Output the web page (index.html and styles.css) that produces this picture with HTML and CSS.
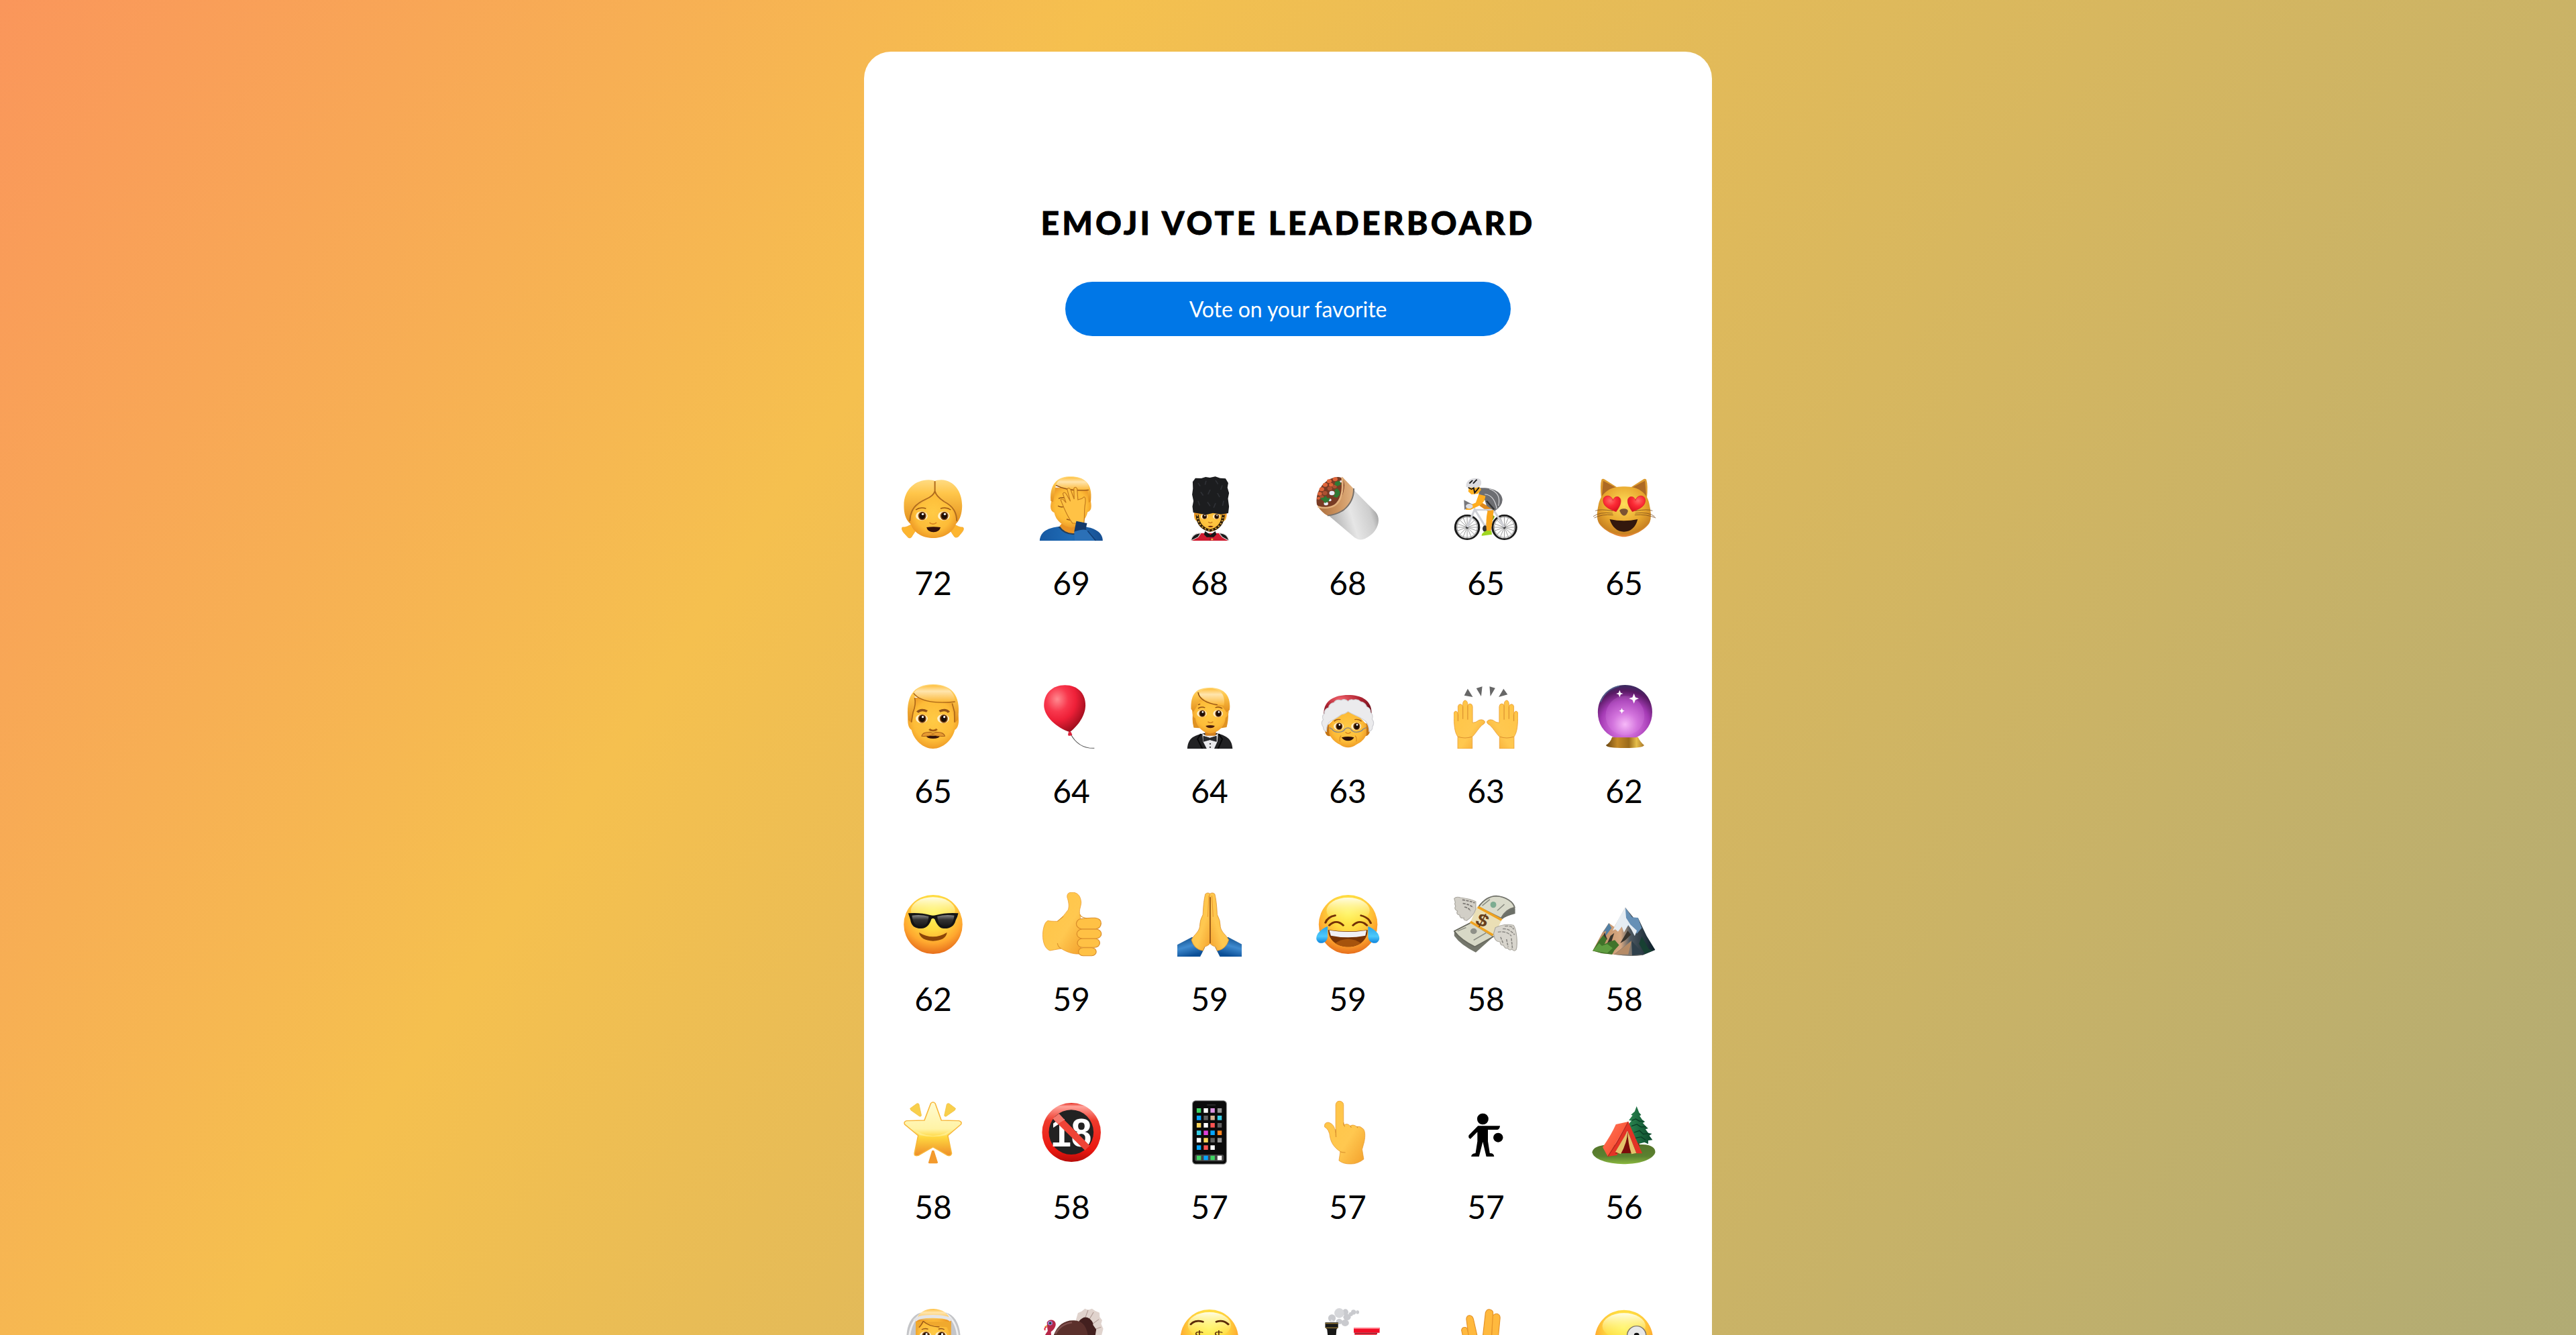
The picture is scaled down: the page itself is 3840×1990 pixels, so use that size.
FILE: index.html
```html
<!DOCTYPE html>
<html lang="en">
<head>
<meta charset="utf-8">
<title>Emoji Vote Leaderboard</title>
<link rel="stylesheet" href="styles.css">
</head>
<body>
<svg class="defs" aria-hidden="true">
  <defs>
    <radialGradient id="skin" cx=".5" cy=".45" r=".6"><stop offset="0" stop-color="#ffca45"/><stop offset=".65" stop-color="#fdbc38"/><stop offset="1" stop-color="#ea9222"/></radialGradient>
    <linearGradient id="hair" x1="0" y1="0" x2="0" y2="1"><stop offset="0" stop-color="#ffdb82"/><stop offset=".3" stop-color="#ffc64a"/><stop offset="1" stop-color="#e18d1c"/></linearGradient>
    <linearGradient id="shine" x1="0" y1="0" x2="0" y2="1"><stop offset="0" stop-color="#ffc040"/><stop offset=".35" stop-color="#ffe5ae"/><stop offset="1" stop-color="#fcb734"/></linearGradient>
    <linearGradient id="hand" x1="0" y1="0" x2="1" y2="1"><stop offset="0" stop-color="#ffc445"/><stop offset=".6" stop-color="#ffc850"/><stop offset="1" stop-color="#f3a02c"/></linearGradient>
    <radialGradient id="face" cx=".5" cy=".3" r=".72"><stop offset="0" stop-color="#fff45c"/><stop offset=".4" stop-color="#ffdb40"/><stop offset=".72" stop-color="#ffa82f"/><stop offset="1" stop-color="#e4681a"/></radialGradient>
    <linearGradient id="gloss" x1="0" y1="0" x2="0" y2="1"><stop offset="0" stop-color="#fffde6"/><stop offset="1" stop-color="#fff45c" stop-opacity="0"/></linearGradient>
    <linearGradient id="blue" x1="0" y1="0" x2="1" y2="0"><stop offset="0" stop-color="#1659a2"/><stop offset=".5" stop-color="#206cb6"/><stop offset="1" stop-color="#174f92"/></linearGradient>
    <linearGradient id="foil" x1="0" y1=".6" x2="1" y2=".3"><stop offset="0" stop-color="#a9a9a9"/><stop offset=".45" stop-color="#e6e6e6"/><stop offset=".8" stop-color="#cdcdcd"/><stop offset="1" stop-color="#8f8f8f"/></linearGradient>
    <linearGradient id="tortilla"><stop offset="0" stop-color="#a86c3e"/><stop offset=".5" stop-color="#c98e58"/><stop offset="1" stop-color="#e2b383"/></linearGradient>
    <radialGradient id="cat" cx=".5" cy=".35" r=".65"><stop offset="0" stop-color="#ffdd58"/><stop offset=".6" stop-color="#e8a72e"/><stop offset=".9" stop-color="#c98322"/><stop offset="1" stop-color="#f18a40"/></radialGradient>
    <radialGradient id="heart" cx=".4" cy=".3" r=".7"><stop offset="0" stop-color="#ff6a68"/><stop offset=".5" stop-color="#fc2b35"/><stop offset="1" stop-color="#dc1322"/></radialGradient>
    <radialGradient id="balloon" cx=".32" cy=".3" r=".75"><stop offset="0" stop-color="#ff8a90"/><stop offset=".35" stop-color="#f8384d"/><stop offset=".6" stop-color="#ee2038"/><stop offset="1" stop-color="#9b0d1c"/></radialGradient>
    <radialGradient id="cap" cx=".35" cy=".2" r=".8"><stop offset="0" stop-color="#f0606a"/><stop offset=".5" stop-color="#b02533"/><stop offset="1" stop-color="#6d0e1a"/></radialGradient>
    <radialGradient id="orb" cx=".5" cy=".75" r=".75"><stop offset="0" stop-color="#fbc0fb"/><stop offset=".3" stop-color="#d06cda"/><stop offset=".6" stop-color="#a43ab4"/><stop offset=".85" stop-color="#571962"/><stop offset="1" stop-color="#3a2c60"/></radialGradient>
    <linearGradient id="gold"><stop offset="0" stop-color="#6a4612"/><stop offset=".3" stop-color="#c48a28"/><stop offset=".6" stop-color="#9a6a1a"/><stop offset=".8" stop-color="#e6bf4b"/><stop offset="1" stop-color="#a8772a"/></linearGradient>
    <linearGradient id="sleeve" x1="0" y1="0" x2=".4" y2="1"><stop offset="0" stop-color="#06407c"/><stop offset=".55" stop-color="#3f8bd0"/><stop offset="1" stop-color="#0b4f97"/></linearGradient>
    <linearGradient id="tear" x1="0" y1="0" x2="0" y2="1"><stop offset="0" stop-color="#2aa2e6"/><stop offset=".6" stop-color="#4cc9fb"/><stop offset="1" stop-color="#0c83dd"/></linearGradient>
    <linearGradient id="star" x1="0" y1="0" x2="0" y2="1"><stop offset="0" stop-color="#fffbd0"/><stop offset=".5" stop-color="#fff3a6"/><stop offset=".65" stop-color="#ffd840"/><stop offset="1" stop-color="#ee8d28"/></linearGradient>
    <linearGradient id="ring" x1="0" y1="0" x2="0" y2="1"><stop offset="0" stop-color="#e5281d"/><stop offset=".06" stop-color="#ffa39b"/><stop offset=".3" stop-color="#ee3a2c"/><stop offset=".8" stop-color="#ea1710"/><stop offset="1" stop-color="#b50c09"/></linearGradient>
    <linearGradient id="rock"><stop offset="0" stop-color="#b98559"/><stop offset=".45" stop-color="#d8a983"/><stop offset=".6" stop-color="#4d5861"/><stop offset="1" stop-color="#0b1e28"/></linearGradient>
    <linearGradient id="grass" x1="0" y1="0" x2="0" y2="1"><stop offset="0" stop-color="#55752a"/><stop offset=".6" stop-color="#5b8130"/><stop offset="1" stop-color="#8ab83e"/></linearGradient>
    <linearGradient id="tree"><stop offset="0" stop-color="#2b8650"/><stop offset="1" stop-color="#0c4a2c"/></linearGradient>
    <linearGradient id="tent" x1="0" y1="0" x2="1" y2="1"><stop offset="0" stop-color="#ff7a5e"/><stop offset=".6" stop-color="#fb5638"/><stop offset="1" stop-color="#d83423"/></linearGradient>
    <linearGradient id="lens" x1="0" y1="0" x2="0" y2="1"><stop offset="0" stop-color="#8a8a8a"/><stop offset=".4" stop-color="#333"/><stop offset="1" stop-color="#161616"/></linearGradient>
    <g id="eye"><ellipse rx="22" ry="20" fill="#fff1c8"/><ellipse cx="2" rx="15" ry="19" fill="#8a4b12"/><ellipse cx="2" rx="11" ry="15" fill="#1c0e06"/><ellipse cx="4" cy="-8" rx="4" ry="5" fill="#fff"/></g>
    <g id="wheel" fill="none"><ellipse rx="44" ry="53" stroke="#1c1c1c" stroke-width="8"/><ellipse rx="38" ry="46" stroke="#777" stroke-width="2"/><path d="M-39 0H39M0-47V47M-28-33L28 33M-28 33L28-33M-37-16L37 16M-37 16L37-16M-15-43L15 43M-15 43L15-43" stroke="#7a7a7a" stroke-width="2"/><ellipse rx="5" ry="6" fill="#222"/></g>
    <path id="love" d="M0-14C-3-30-15-38-26-33C-40-27-38-3-28 10C-18 23 0 31 12 36C20 22 30 5 29-14C28-34 6-38 0-14Z" fill="url(#heart)" stroke="#d81c28" stroke-width="2"/>
    <path id="spark" d="M0-16L4-4L13 0L4 4L0 16L-4 4L-13 0L-4-4Z" fill="#fff"/>
  </defs>
</svg>
<main class="card">
  <h1 class="title">Emoji Vote Leaderboard</h1>
  <a class="button">Vote on your favorite</a>
  <div class="board">

    <div class="entry">
      <svg class="emoji" viewBox="57 90 239 288" preserveAspectRatio="none">
        <path d="M100 300Q80 320 62 318Q58 325 66 340L84 364Q94 370 99 356L116 325ZM250 300Q272 320 287 318Q293 324 285 338L270 360Q258 368 253 356L236 325Z" fill="#fdb52f" stroke="#f0a42a" stroke-width="2"/>
        <path d="M68 220C68 150 110 106 160 106Q176 106 183 111Q190 106 207 106C255 108 284 160 284 220C284 265 272 292 258 306H96C76 288 68 262 68 220Z" fill="url(#hair)"/>
        <path d="M90 290C88 240 130 215 160 190Q180 172 183 155Q188 180 215 205C245 225 268 245 264 290C255 345 210 366 178 366C140 366 100 345 90 290Z" fill="url(#skin)"/>
        <path d="M183 112V156Q178 178 150 192C110 214 92 238 90 290M183 156Q188 180 217 203C250 224 264 250 264 290" fill="none" stroke="#b06c1e" stroke-width="5"/>
        <path d="M112 240Q128 226 150 234M204 234Q226 226 242 240" fill="none" stroke="#985413" stroke-width="4"/>
        <use href="#eye" x="134" y="267"/><use href="#eye" x="216" y="267"/>
        <path d="M163 297Q176 310 189 297" fill="none" stroke="#d9821f" stroke-width="5"/>
        <path d="M152 318Q178 314 204 318Q200 340 178 340Q156 340 152 318Z" fill="#35120a"/>
      </svg>
      <span class="votes">72</span>
    </div>

    <div class="entry">
      <svg class="emoji" viewBox="570 90 239 288" preserveAspectRatio="none">
        <path d="M572 378C574 335 605 320 645 314H730C775 318 806 340 806 378Z" fill="url(#blue)"/>
        <path d="M646 312Q672 360 712 345L712 300H655Z" fill="#e99324"/><path d="M644 316Q668 354 706 347" fill="none" stroke="#243f5c" stroke-width="6"/>
        <path d="M614 210Q608 245 626 252C632 290 660 315 690 320C725 312 745 280 750 250Q768 245 762 205L755 140H625Z" fill="url(#skin)"/>
        <path d="M613 200C608 110 650 90 688 91C735 91 770 120 762 200L754 208L750 152C710 158 670 152 632 130L622 205Z" fill="url(#hair)"/>
        <path d="M632 130C640 100 665 94 690 94C730 96 758 115 754 151C705 156 665 150 632 130Z" fill="url(#shine)"/>
        <path d="M632 130C665 150 705 156 754 151M642 190Q652 182 664 186M640 222Q650 230 662 226M672 282L686 286" fill="none" stroke="#914f15" stroke-width="4"/>
        <path d="M694 300C670 262 660 225 650 195Q656 186 664 200L670 208L658 168Q664 155 672 172L686 202L674 148Q680 136 687 150L700 192L699 144Q705 132 711 146L714 195L728 190L737 182Q744 186 741 212C736 244 740 270 736 300Z" fill="#ffc245" stroke="#c37a1e" stroke-width="3"/>
        <path d="M708 290L748 300Q742 325 746 334L700 338Z" fill="#14396a"/>
        <path d="M700 338Q740 322 750 334L780 378H702Z" fill="#2b70b7"/><path d="M750 334L780 378" stroke="#123c72" stroke-width="4"/>
      </svg>
      <span class="votes">69</span>
    </div>

    <div class="entry">
      <svg class="emoji" viewBox="1083 90 239 288" preserveAspectRatio="none">
        <path d="M1134 378Q1138 345 1165 344H1245Q1270 348 1274 378Z" fill="#cf1b2f"/>
        <path d="M1134 378Q1138 345 1170 344L1160 362ZM1274 378Q1270 345 1238 344L1250 362Z" fill="#1a1a1a" stroke="#ddd" stroke-width="3"/>
        <path d="M1186 335L1206 352L1224 335L1228 350L1218 362H1192L1182 350Z" fill="#161616"/>
        <path d="M1146 250H1266Q1268 290 1252 292Q1240 332 1206 338Q1172 332 1160 292Q1142 290 1146 250Z" fill="url(#skin)"/>
        <path d="M1157 262Q1160 322 1205 332Q1250 322 1254 262" fill="none" stroke="#2b1a05" stroke-width="11"/><path d="M1157 262Q1160 322 1205 332Q1250 322 1254 262" fill="none" stroke="#d5a340" stroke-width="6" stroke-dasharray="6 8"/>
        <g transform="translate(1183 270) scale(.6)"><use href="#eye"/></g><g transform="translate(1228 270) scale(.6)"><use href="#eye"/></g>
        <path d="M1198 294Q1206 303 1213 294" fill="none" stroke="#c97a1e" stroke-width="4"/><path d="M1196 314Q1206 309 1217 314Q1206 322 1196 314Z" fill="#6b2b12"/>
        <path d="M1140 115L1150 98L1172 99L1188 93L1204 96L1224 91L1242 98L1262 100L1272 120L1269 140L1275 165L1271 190L1275 225L1272 255L1245 260L1215 254L1190 262L1160 256L1142 252L1139 225L1143 200L1138 172L1141 145Z" fill="#1c1d1f"/>
        <path d="M1160 120l8 14M1190 110l-4 18M1225 108l9 17M1250 130l-6 20M1170 160l9 16M1205 150l-8 20M1232 165l8 18M1160 200l6 20M1195 205l10 18M1225 210l-7 20M1255 200l-4 22" stroke="#303237" stroke-width="4"/>
        <path d="M1205 362V378" stroke="#8c1220" stroke-width="2"/><circle cx="1212" cy="372" r="4" fill="#ecc342"/>
      </svg>
      <span class="votes">68</span>
    </div>

    <div class="entry">
      <svg class="emoji" viewBox="77 90 239 288" preserveAspectRatio="none">
        <path d="M122 262L212 142L300 250C325 285 305 345 262 368Q240 380 222 364Z" fill="url(#foil)"/>
        <path d="M82 215Q96 250 122 266Q150 262 180 240Q222 200 219 146L176 92Z" fill="url(#tortilla)"/>
        <path d="M122 266Q155 262 182 240Q220 202 219 144" fill="none" stroke="#77706a" stroke-width="5"/>
        <path d="M82 215C74 165 105 98 160 93Q182 92 184 130Q182 190 148 220C122 236 90 232 82 215Z" fill="#783b24"/>
        <g fill="#e0653a"><circle cx="150" cy="103" r="9"/><circle cx="128" cy="112" r="9"/><circle cx="113" cy="128" r="9"/><circle cx="100" cy="148" r="9"/><circle cx="93" cy="168" r="8"/><circle cx="135" cy="128" r="8"/><circle cx="88" cy="188" r="6"/></g>
        <g fill="#ad5132"><circle cx="130" cy="145" r="9"/><circle cx="112" cy="165" r="9"/><circle cx="148" cy="136" r="8"/><circle cx="100" cy="183" r="8"/></g>
        <g fill="#e7edf8"><circle cx="138" cy="165" r="10"/><circle cx="116" cy="212" r="8"/><circle cx="172" cy="113" r="5"/><circle cx="130" cy="196" r="6"/></g>
        <path d="M94 188L110 184L114 176L122 188L132 186L126 202L112 210L106 200ZM148 150L158 144L168 160L166 174L156 186L142 180L150 168ZM150 115L166 110L172 126L158 134L148 128Z" fill="#2f7a34"/>
        <path d="M176 96Q184 190 148 220Q122 238 86 226" fill="none" stroke="#e3b27e" stroke-width="7"/>
      </svg>
      <span class="votes">68</span>
    </div>

    <div class="entry">
      <svg class="emoji" viewBox="590 90 239 288" preserveAspectRatio="none">
        <use href="#wheel" x="640" y="318"/><use href="#wheel" x="778" y="318"/>
        <path d="M734 262L742 270L736 286L728 276Z" fill="#7aa51d"/>
        <path d="M690 205L740 240L720 250L686 222Z" fill="#e0891c"/>
        <path d="M640 318L668 238L706 312M668 240H738L778 318M706 318L738 245" fill="none" stroke="#cfd0d6" stroke-width="8"/>
        <ellipse cx="706" cy="324" rx="9" ry="14" fill="#333"/>
        <path d="M686 142C735 138 770 160 771 195Q770 225 742 245L712 222L705 195L683 172Z" fill="#6d6e72"/><path d="M705 170Q740 172 750 235M722 146Q768 165 756 222" fill="none" stroke="#d8d8da" stroke-width="3"/><path d="M712 200L740 238" stroke="#333" stroke-width="6"/>
        <path d="M683 170L708 178Q706 202 690 218L652 240L634 240L640 225L672 208Z" fill="#ffad1f"/>
        <path d="M738 240Q736 285 728 335L712 337Q708 280 716 245Z" fill="#f9a51c"/>
        <path d="M712 332L730 334L732 350L694 356Q692 344 712 332Z" fill="#a0d622"/>
        <path d="M628 196L660 216L658 234L640 232L630 240Z" fill="#77777b"/><ellipse cx="648" cy="224" rx="13" ry="11" fill="#dfdfe3"/>
        <path d="M647 134L682 130L692 150L680 168L656 171L644 158Z" fill="#ffb022"/>
        <path d="M636 138Q634 100 672 98Q696 98 692 125Q688 142 664 142Z" fill="#dcdce0"/><path d="M648 122L660 108M662 122L676 104M644 140L656 148L664 142L668 164L684 140" fill="none" stroke="#18181a" stroke-width="5"/>
      </svg>
      <span class="votes">65</span>
    </div>

    <div class="entry">
      <svg class="emoji" viewBox="1103 90 239 288" preserveAspectRatio="none">
        <path d="M1139 104Q1144 98 1152 105L1198 140L1138 190Q1132 130 1139 104ZM1305 104Q1299 98 1292 105L1246 140L1307 190Q1312 130 1305 104Z" fill="#dd9c32"/><path d="M1145 110L1192 140L1140 182ZM1300 110L1252 140L1305 182Z" fill="#ad6a25"/>
        <path d="M1222 136C1280 134 1312 170 1317 220Q1326 270 1318 295C1305 330 1250 361 1222 361S1140 330 1127 295Q1118 270 1127 220C1134 170 1166 134 1222 136Z" fill="url(#cat)"/>
        <use href="#love" x="1181" y="212"/><g transform="translate(1265 212) scale(-1 1)"><use href="#love"/></g>
        <path d="M1206 244Q1208 235 1222 235Q1236 235 1237 246Q1232 266 1222 266Q1212 264 1206 244Z" fill="#7c5332"/>
        <path d="M1169 282Q1222 296 1273 282C1266 318 1246 338 1222 338S1178 318 1169 282Z" fill="#33180d"/>
        <path d="M1180 245Q1135 235 1116 244M1180 255Q1130 248 1108 270M1182 263Q1140 258 1112 276M1264 245Q1310 235 1328 244M1264 255Q1315 248 1336 270M1262 263Q1305 258 1340 276" fill="none" stroke="#754719" stroke-width="2"/>
      </svg>
      <span class="votes">65</span>
    </div>

    <div class="entry">
      <svg class="emoji" viewBox="57 90 239 288" preserveAspectRatio="none">
        <path d="M84 228Q78 280 96 294C105 340 140 378 176 378S248 340 257 294Q276 280 270 228L256 150H96Z" fill="url(#skin)"/>
        <path d="M84 250C74 150 100 90 176 90C255 90 282 155 268 250L258 262L244 172L108 145Q112 180 104 208L96 262Z" fill="url(#hair)"/>
        <path d="M104 132C115 105 145 95 176 94C225 94 255 120 258 166C215 174 140 178 104 132Z" fill="url(#shine)"/>
        <path d="M104 130C135 178 215 174 258 168M247 175L256 215V260M108 150Q114 180 102 215L96 260" fill="none" stroke="#ab6618" stroke-width="4"/>
        <path d="M118 215Q132 198 154 211M200 211Q222 198 235 215" fill="none" stroke="#8f5118" stroke-width="10"/>
        <use href="#eye" x="134" y="244"/><use href="#eye" x="214" y="244"/>
        <path d="M162 291Q176 304 191 291" fill="none" stroke="#a35c14" stroke-width="8"/>
        <path d="M150 320H202Q198 333 176 333Q155 333 150 320Z" fill="#32120a"/><path d="M134 322Q136 304 165 304L176 309L188 304Q216 304 220 322Q195 325 176 316Q155 325 134 322Z" fill="#e69a30" stroke="#a9611a" stroke-width="3"/>
      </svg>
      <span class="votes">65</span>
    </div>

    <div class="entry">
      <svg class="emoji" viewBox="570 90 239 288" preserveAspectRatio="none">
        <path d="M686 310Q715 378 775 376" fill="none" stroke="#555" stroke-width="3"/>
        <path d="M684 304C635 285 588 235 588 184C588 130 620 94 666 94S742 130 742 184C742 230 715 275 684 304Z" fill="url(#balloon)"/>
        <path d="M679 304L688 303L693 316Q685 324 677 318Z" fill="#dc243b"/>
      </svg>
      <span class="votes">64</span>
    </div>

    <div class="entry">
      <svg class="emoji" viewBox="1083 90 239 288" preserveAspectRatio="none">
        <path d="M1120 378C1123 325 1150 318 1185 308H1228C1260 318 1286 330 1288 378Z" fill="#222224"/>
        <path d="M1142 205Q1136 255 1144 284L1164 286H1248L1266 282Q1274 250 1272 190Z" fill="#df9222"/>
        <path d="M1186 300H1226V322L1206 335L1186 322Z" fill="#d4811f"/>
        <path d="M1176 310L1190 320H1222L1234 310L1232 345L1220 378H1192L1178 345Z" fill="#eaeaed"/>
        <path d="M1180 322L1204 331L1228 322V346L1204 338L1180 346Z" fill="#2b2c30" stroke="#111" stroke-width="2"/><circle cx="1205" cy="356" r="3" fill="#222"/><circle cx="1205" cy="371" r="3" fill="#222"/>
        <path d="M1170 312L1158 335L1176 378M1236 312L1250 335L1234 378" fill="none" stroke="#070708" stroke-width="5"/>
        <path d="M1140 190Q1134 235 1150 242C1153 280 1180 308 1206 310C1232 308 1260 280 1262 240Q1278 230 1272 190L1250 150H1165Z" fill="url(#skin)"/>
        <path d="M1134 200C1132 130 1155 105 1205 105C1255 105 1284 140 1277 205L1266 215L1250 190C1215 188 1180 165 1166 158L1155 190L1142 214Z" fill="url(#hair)"/>
        <path d="M1164 140C1165 110 1190 108 1210 109C1245 112 1262 140 1256 185Q1205 182 1164 140Z" fill="url(#shine)"/>
        <path d="M1160 126Q1166 170 1232 182M1160 182L1168 178" fill="none" stroke="#8e4e14" stroke-width="4"/>
        <path d="M1160 198Q1172 188 1186 195M1224 195Q1236 188 1250 198" fill="none" stroke="#8e4e14" stroke-width="4"/>
        <g transform="translate(1174 221) scale(.82)"><use href="#eye"/></g><g transform="translate(1234 221) scale(.82)"><use href="#eye"/></g>
        <path d="M1196 257Q1206 267 1216 257" fill="none" stroke="#d18120" stroke-width="4"/><path d="M1188 276Q1206 270 1222 276Q1218 286 1206 286Q1194 286 1188 276Z" fill="#4a1c0b"/>
      </svg>
      <span class="votes">64</span>
    </div>

    <div class="entry">
      <svg class="emoji" viewBox="77 90 239 288" preserveAspectRatio="none">
        <path d="M112 270Q108 322 130 322H264Q284 318 280 265Z" fill="#c37314"/>
        <path d="M108 225C105 165 145 138 198 138S288 165 285 225Z" fill="url(#cap)"/>
        <path d="M126 270L160 230L198 212L236 230L266 270V315C255 345 240 352 228 360Q198 386 168 360C155 352 138 340 128 312Z" fill="url(#skin)"/>
        <path d="M198 166Q185 152 172 162Q155 154 145 172Q128 176 126 194Q108 202 111 220Q98 232 106 248Q94 262 106 282Q105 296 118 302Q116 270 134 254Q158 240 172 226Q188 222 198 212Q212 222 224 228Q244 238 262 254Q276 272 276 302Q290 294 288 280Q298 262 287 246Q292 226 281 216Q282 197 267 190Q262 172 245 168Q232 154 218 160Q205 154 198 166Z" fill="#ebebed" stroke="#d0d0d4" stroke-width="3"/>
        <path d="M146 256Q154 244 170 248M222 248Q238 244 248 256" fill="none" stroke="#a45c14" stroke-width="4"/>
        <g transform="translate(163 278) scale(.85)"><use href="#eye"/></g><g transform="translate(228 278) scale(.85)"><use href="#eye"/></g>
        <path d="M128 284L138 290Q146 306 164 304Q182 302 186 290Q198 280 208 290Q214 304 230 304Q248 302 254 290L266 284" fill="none" stroke="#8d8780" stroke-width="4"/>
        <path d="M188 304Q198 316 208 304" fill="none" stroke="#d8811b" stroke-width="4"/><path d="M174 328Q198 320 220 328Q214 343 198 343T174 328Z" fill="#2c1009"/>
        <path d="M172 320Q164 330 168 346M224 320Q232 330 228 346" fill="none" stroke="#d98b20" stroke-width="3"/>
      </svg>
      <span class="votes">63</span>
    </div>

    <div class="entry">
      <svg class="emoji" viewBox="590 90 239 288" preserveAspectRatio="none">
        <path d="M642 110L661 147L629 140ZM674 108L696 100L692 144ZM723 100L744 107L726 144ZM775 110L790 136L757 147Z" fill="#676767"/>
        <path id="palm" d="M605 378V325C592 300 592 275 590 222Q592 210 598 210Q605 212 606 225V188Q608 179 615 179Q622 180 624 190V175Q626 162 633 162Q640 163 642 178V186Q644 177 651 177Q659 178 660 190V262Q672 262 684 250Q700 245 706 258Q706 266 694 274C680 290 672 310 659 325V378Z" fill="url(#hand)" stroke="#e8982c" stroke-width="2"/>
        <path d="M606 225V255M624 190V245M642 186V248M606 325Q632 335 658 325" fill="none" stroke="#dc9330" stroke-width="3"/>
        <g transform="translate(1419 0) scale(-1 1)"><use href="#palm"/><path d="M606 225V255M624 190V245M642 186V248M606 325Q632 335 658 325" fill="none" stroke="#dc9330" stroke-width="3"/></g>
      </svg>
      <span class="votes">63</span>
    </div>

    <div class="entry">
      <svg class="emoji" viewBox="1103 90 239 288" preserveAspectRatio="none">
        <path d="M1178 326H1274Q1284 350 1297 362Q1294 375 1226 375T1155 362Q1172 350 1178 326Z" fill="url(#gold)"/>
        <path d="M1185 328C1145 305 1125 265 1125 215C1125 145 1170 93 1226 93S1327 145 1327 215C1327 265 1305 305 1268 328Z" fill="url(#orb)"/>
        <ellipse cx="1226" cy="230" rx="72" ry="88" fill="#e29af0" opacity=".18"/>
        <path d="M1135 170Q1155 110 1205 98" fill="none" stroke="#557299" stroke-width="5" opacity=".7"/>
        <use href="#spark" x="1206" y="132"/><g transform="translate(1259 154) scale(1.4)"><use href="#spark"/></g><g transform="translate(1214 209) scale(.8)"><use href="#spark"/></g>
      </svg>
      <span class="votes">62</span>
    </div>

    <div class="entry">
      <svg class="emoji" viewBox="57 90 239 288" preserveAspectRatio="none">
        <ellipse cx="176.500" cy="234" rx="109" ry="132" fill="url(#face)"/><ellipse cx="176" cy="172" rx="82" ry="60" fill="url(#gloss)"/>
        <path d="M84 184Q130 180 165 192Q176 196 188 192Q225 180 270 184L266 200L260 216C255 245 235 254 215 252C195 250 188 225 182 210Q176 204 170 210C165 230 155 252 132 252C108 252 95 240 92 212Z" fill="#141414"/>
        <path d="M98 194Q130 188 160 198Q158 242 130 244Q102 242 98 194ZM255 194Q222 188 192 198Q195 242 222 244Q250 242 255 194Z" fill="url(#lens)"/>
        <path d="M124 270Q176 308 228 270Q224 306 176 308Q130 306 124 270Z" fill="#8c4508"/>
      </svg>
      <span class="votes">62</span>
    </div>

    <div class="entry">
      <svg class="emoji" viewBox="570 90 239 288" preserveAspectRatio="none">
        <path d="M638 220Q610 220 603 217C580 225 572 335 610 351L652 342C675 360 700 368 722 366L732 300L722 192C716 170 726 155 726 135C724 105 712 90 690 90Q672 92 674 112C680 135 682 150 678 168Q660 200 638 220Z" fill="url(#hand)" stroke="#e9992c" stroke-width="2"/>
        <g fill="#ffc145" stroke="#d98c2a" stroke-width="3"><rect x="716" y="338" width="66" height="36" rx="17" ry="18"/><rect x="712" y="297" width="83" height="40" rx="19" ry="20"/><rect x="710" y="255" width="91" height="42" rx="20" ry="21"/><path d="M720 210Q750 203 778 205Q800 208 800 230Q798 252 780 254H726Q708 248 708 230Q710 216 720 210Z"/></g>
        <path d="M638 220Q650 208 660 198M638 318Q640 335 652 342M722 190Q724 202 748 207" fill="none" stroke="#dc942c" stroke-width="3"/>
      </svg>
      <span class="votes">59</span>
    </div>

    <div class="entry">
      <svg class="emoji" viewBox="1083 90 239 288" preserveAspectRatio="none">
        <path id="cuff" d="M1083 325L1138 290L1186 335L1168 378H1083Z" fill="url(#sleeve)"/><g transform="translate(2409 0) scale(-1 1)"><use href="#cuff"/></g>
        <path id="pray" d="M1206 98Q1196 88 1187 98Q1180 130 1178 190Q1166 215 1166 245C1162 270 1145 280 1135 303Q1145 345 1178 352L1185 334Q1205 325 1205 315Z" fill="url(#hand)" stroke="#d98a26" stroke-width="2"/>
        <g transform="translate(2409 0) scale(-1 1)"><use href="#pray"/></g>
        <path d="M1205 112V318" stroke="#8b4b12" stroke-width="4"/><path d="M1200 105L1196 200M1211 105L1216 200" stroke="#ed9f30" stroke-width="3"/>
      </svg>
      <span class="votes">59</span>
    </div>

    <div class="entry">
      <svg class="emoji" viewBox="77 90 239 288" preserveAspectRatio="none">
        <ellipse cx="198" cy="234" rx="109" ry="132" fill="url(#face)"/><ellipse cx="198" cy="172" rx="80" ry="58" fill="url(#gloss)"/>
        <path d="M114 226Q122 200 150 194M246 194Q274 202 282 228M128 238Q154 208 180 238M216 238Q242 208 268 238" fill="none" stroke="#743107" stroke-width="8" stroke-linecap="round"/>
        <path d="M124 258Q198 272 270 258C272 302 240 334 198 334S124 302 124 258Z" fill="#773306"/><path d="M150 318Q198 280 246 318Q225 334 198 334T150 318Z" fill="#a6530c"/>
        <path d="M128 260Q198 274 266 260L262 284Q198 300 134 284Z" fill="#f0f0f5"/>
        <path id="drop" d="M122 242C96 256 80 275 80 296C82 326 118 325 122 290Z" fill="url(#tear)"/><g transform="translate(394 0) scale(-1 1)"><use href="#drop"/></g>
      </svg>
      <span class="votes">59</span>
    </div>

    <div class="entry">
      <svg class="emoji" viewBox="590 90 239 288" preserveAspectRatio="none">
        <path d="M592 264L654 226L738 288L672 359Q615 325 592 285Z" fill="#74766b"/>
        <path d="M592 264L654 226L738 288L668 334Q615 302 592 264Z" fill="#d7d8c6" stroke="#68695f" stroke-width="5"/>
        <path d="M682 156Q710 108 748 106C785 108 815 135 818 165V186Q785 195 768 212L708 170Z" fill="#6c7068"/>
        <path d="M682 156Q710 108 748 107C785 110 812 135 816 158Q785 165 766 206Z" fill="#dadbcb" stroke="#73746c" stroke-width="5"/>
        <ellipse cx="737" cy="146" rx="11" ry="14" fill="#7dac91"/><ellipse cx="664" cy="264" rx="12" ry="13" fill="#8e9087"/><path d="M752 172L778 144M696 150L724 122M664 304L710 272M604 264L636 248" stroke="#888a80" stroke-width="4"/>
        <path d="M678 152L770 210L738 288L650 228Z" fill="#eadfb5"/><path d="M680 156L768 214M652 222L736 282" stroke="#efa21f" stroke-width="10"/>
        <text x="697" y="242" class="cash" transform="rotate(24 697 215)">$</text>
        <path d="M592 118Q600 108 615 114Q655 120 672 132L672 165Q665 195 638 217Q625 215 628 205Q612 208 612 192Q598 190 604 174Q590 166 597 152Q592 140 596 136Z" fill="#d2cfc7" stroke="#aaa79f" stroke-width="3"/>
        <path d="M622 124Q655 130 668 138M624 140Q650 145 662 158M630 156Q648 160 652 174" fill="none" stroke="#77736f" stroke-width="5" stroke-dasharray="10 4"/>
        <path d="M745 248Q780 228 812 238C824 260 828 320 822 346Q816 358 806 344Q798 354 790 340Q780 344 774 326Q764 330 762 312Q748 312 742 296L738 276Z" fill="#d8d5cd" stroke="#aba8a0" stroke-width="3"/>
        <path d="M780 242Q808 238 812 256M772 254Q794 250 816 280M754 268Q788 262 804 286M786 300L792 335M804 296L808 342M764 290L774 320" fill="none" stroke="#898782" stroke-width="4" stroke-dasharray="12 4"/>
      </svg>
      <span class="votes">58</span>
    </div>

    <div class="entry">
      <svg class="emoji" viewBox="1103 90 239 288" preserveAspectRatio="none">
        <path d="M1106 352L1142 270L1166 228L1186 245L1227 158L1262 210L1274 204L1306 285L1338 348L1292 371Q1240 378 1195 370L1140 363Z" fill="url(#rock)"/>
        <path d="M1227 158L1252 202L1274 204L1288 250L1270 275L1240 240L1224 248Z" fill="#6690b6"/>
        <path d="M1227 158L1204 204L1180 262L1190 256L1200 266L1214 244L1222 270L1238 236L1250 258L1262 286L1270 262L1246 235L1230 205Z" fill="#e6edf3"/>
        <path d="M1166 228L1144 270L1156 262L1150 292L1176 250Z" fill="#537fa3"/>
        <path d="M1172 285L1186 272L1176 310L1152 340ZM1236 262L1248 280L1226 305L1208 318ZM1150 270L1160 300L1134 320Z" fill="#39342d"/>
        <path d="M1106 352L1130 305L1145 282L1158 300L1150 322L1172 310L1188 304L1204 326L1186 350L1178 368L1140 363Z" fill="#41732a"/><path d="M1106 352L1130 318L1140 330L1160 322L1180 340L1160 362Z" fill="#5f9d40"/>
        <path d="M1185 368L1250 306L1272 340L1290 372Q1235 378 1185 368Z" fill="#7d7771"/><path d="M1250 306L1296 368L1252 373Z" fill="#2f404b"/><path d="M1186 368L1250 308L1238 368Z" fill="#b58b66"/><path d="M1288 288L1315 345L1330 350L1300 366L1278 320Z" fill="#174032"/>
      </svg>
      <span class="votes">58</span>
    </div>

    <div class="entry">
      <svg class="emoji" viewBox="57 90 239 288" preserveAspectRatio="none">
        <path d="M91 127L116 105Q122 103 124 108L133 158Q132 164 126 162L94 135ZM260 127L236 105Q230 103 227 108L218 158Q219 164 225 162L257 135Z" fill="#f8cf4c" stroke="#f3c040" stroke-width="2"/>
        <path d="M172 316Q176 312 180 316L194 368Q194 373 188 373H164Q158 373 159 368Z" fill="#f39a2d"/>
        <path d="M168 104Q176 94 184 104L207 180L272 182Q285 186 280 198L231 248L245 328Q242 342 230 337L176 299L122 337Q106 342 107 328L121 248L71 198Q66 186 78 182L144 180Z" fill="url(#star)" stroke="#f8b83c" stroke-width="4"/>
        <path d="M94 210Q176 290 258 210L224 246Q176 260 128 246Z" fill="#fff3a0" opacity=".6"/>
      </svg>
      <span class="votes">58</span>
    </div>

    <div class="entry">
      <svg class="emoji" viewBox="570 90 239 288" preserveAspectRatio="none">
        <ellipse cx="690" cy="234" rx="109" ry="132" fill="url(#ring)"/><ellipse cx="689" cy="233" rx="83" ry="100" fill="#222"/>
        <text x="613" y="297" class="age" textLength="152" lengthAdjust="spacingAndGlyphs">18</text>
        <path d="M641 151L758 293L740 314L623 176Z" fill="#ef4437"/><path d="M621 172L644 150L665 178L640 196Z" fill="#f5776c"/>
      </svg>
      <span class="votes">58</span>
    </div>

    <div class="entry">
      <svg class="emoji" viewBox="1083 90 239 288" preserveAspectRatio="none">
        <rect x="1139" y="92" width="127" height="284" rx="12" ry="15" fill="#0b0b0b" stroke="#999" stroke-width="3"/><rect x="1192" y="108" width="34" height="7" rx="3" fill="#252525"/>
        <rect x="1148" y="333" width="108" height="30" rx="8" fill="#454545"/>
        <g fill="#3fd563"><path d="M1155 126h16v20h-16zM1155 338h16v20h-16zM1206 338h16v20h-16z"/></g>
        <g fill="#fff"><path d="M1181 126h16v20h-16zM1181 192h16v20h-16zM1155 259h16v20h-16zM1206 292h16v20h-16zM1232 338h16v20h-16z"/></g>
        <g fill="#06a5ff"><path d="M1155 159h16v20h-16zM1206 226h16v20h-16zM1155 292h16v20h-16zM1181 338h16v20h-16z"/></g>
        <g fill="#fbd55a"><path d="M1155 192h16v20h-16zM1181 259h16v20h-16z"/></g>
        <g fill="#fa5351"><path d="M1206 192h16v20h-16zM1181 292h16v20h-16z"/></g>
        <g fill="#606060"><path d="M1181 159h16v20h-16zM1232 192h16v20h-16zM1206 259h16v20h-16z"/></g>
        <g fill="#949494"><path d="M1232 126h16v20h-16zM1232 259h16v20h-16z"/></g>
        <g fill="#37cde5"><path d="M1232 159h16v20h-16zM1155 226h16v20h-16z"/></g>
        <path d="M1206 126h16v20h-16z" fill="#dc93e0"/><path d="M1206 159h16v20h-16z" fill="#d8b392"/><path d="M1181 226h16v20h-16z" fill="#df3fd9"/><path d="M1232 226h16v20h-16z" fill="#ff8520"/>
      </svg>
      <span class="votes">57</span>
    </div>

    <div class="entry">
      <svg class="emoji" viewBox="77 90 239 288" preserveAspectRatio="none">
        <path d="M164 360L169 320C145 300 135 280 131 255Q128 220 111 210Q108 190 124 189C142 194 148 210 152 235V110Q154 94 166 94Q180 96 181 110V202Q194 190 206 205Q216 196 230 208Q242 204 252 216C262 225 262 250 258 275L250 310L256 354Q232 376 208 375Q180 376 164 360Z" fill="url(#hand)" stroke="#e6982d" stroke-width="2"/>
        <path d="M152 220L153 255M181 190Q182 204 186 208M206 205L210 212M230 208L234 214M168 320Q178 324 188 324" fill="none" stroke="#d88f2c" stroke-width="3"/>
      </svg>
      <span class="votes">57</span>
    </div>

    <div class="entry">
      <svg class="emoji" viewBox="590 90 239 288" preserveAspectRatio="none">
        <ellipse cx="698" cy="174" rx="21" ry="25"/><ellipse cx="755" cy="257" rx="18" ry="21"/>
        <path d="M680 205H762Q760 221 752 222H717V274L724 327Q739 326 740 342H711L698 276L684 342H655Q656 328 671 327L678 274V232L652 263Q643 260 646 247Z"/>
      </svg>
      <span class="votes">57</span>
    </div>

    <div class="entry">
      <svg class="emoji" viewBox="1103 90 239 288" preserveAspectRatio="none">
        <path d="M1104 322C1110 295 1140 290 1180 288H1290C1325 288 1340 305 1338 325C1325 365 1260 376 1220 376C1160 374 1108 355 1104 322Z" fill="url(#grass)"/>
        <path d="M1270 270H1279V295H1270Z" fill="#5a3218"/>
        <path d="M1269 117L1278 145L1286 156L1280 160L1290 178L1300 186L1292 192L1304 208L1312 216L1302 220L1312 236L1326 240L1316 248L1328 268L1312 270L1312 286L1298 278L1280 284L1252 270L1236 200L1250 182L1240 180L1254 158L1248 155L1262 140Z" fill="url(#tree)"/>
        <path d="M1252 180L1266 174L1280 184L1294 184M1250 206L1270 198L1286 210L1304 208M1260 234L1280 226L1294 242L1312 238M1262 260L1286 254L1302 268" fill="none" stroke="#0a3f26" stroke-width="4"/>
        <path d="M1143 300Q1175 245 1192 198L1238 186L1162 342Z" fill="url(#tent)"/><path d="M1238 186L1290 328L1268 328L1234 228L1196 336L1162 342Z" fill="#e33326"/>
        <path d="M1236 228L1268 326L1190 328Z" fill="#7d0c0a"/><path d="M1236 228Q1234 280 1210 331L1190 322ZM1236 228Q1236 280 1250 331L1268 326Z" fill="#e5c36b"/>
        <path d="M1238 186L1196 280L1162 342" fill="none" stroke="#b42a1d" stroke-width="3"/>
      </svg>
      <span class="votes">56</span>
    </div>

    <div class="entry">
      <svg class="emoji" viewBox="57 120 239 288" preserveAspectRatio="none">
        <path d="M78 250C78 190 100 150 130 140H225C255 150 278 190 278 260V300H78Z" fill="#c4c5c8"/><path d="M88 250Q92 180 132 145M268 250Q264 180 225 145" fill="none" stroke="#efeff0" stroke-width="7"/>
        <path d="M116 168Q128 124 178 123Q228 126 240 172Z" fill="url(#shine)"/>
        <path d="M112 300V170H243V300Z" fill="url(#skin)"/><path d="M112 180H242V240L228 205Q175 205 140 180L122 205L112 240Z" fill="#f0a92e"/>
        <path d="M140 178Q160 202 200 204M140 178Q132 198 124 206" fill="none" stroke="#9a5817" stroke-width="4"/><path d="M108 176Q120 156 178 157Q234 158 244 176" fill="none" stroke="#e4e4e6" stroke-width="14"/>
        <path d="M134 216Q146 208 158 214M196 214Q208 208 218 216" fill="none" stroke="#96551a" stroke-width="4"/>
        <use href="#eye" x="148" y="244"/><use href="#eye" x="206" y="244"/>
      </svg>
    </div>

    <div class="entry">
      <svg class="emoji" viewBox="570 120 239 288" preserveAspectRatio="none">
        <path d="M706 175L714 142L728 134L740 122L752 128L766 122L778 132L794 140L795 160L804 174L800 190L808 212L802 240V300H730Z" fill="#e0d3cd"/><path d="M742 160L752 128M756 170L772 138M768 190L792 170M775 215L800 205" stroke="#b39e98" stroke-width="3"/>
        <path d="M718 178Q738 150 756 166Q772 182 770 195L782 215L778 245V300H730Z" fill="#43201f"/>
        <path d="M615 300C618 220 650 175 695 175C735 175 755 205 754 300Z" fill="#5b302c"/><path d="M630 235Q650 190 692 184" fill="none" stroke="#815250" stroke-width="7"/>
        <path d="M599 184Q604 170 620 173Q634 180 631 198Q627 215 614 226L616 270H582Q590 240 602 222L600 205Z" fill="#b62748"/><ellipse cx="611" cy="187" rx="9" ry="10" fill="#9b7acd"/><ellipse cx="611" cy="187" rx="4" ry="5" fill="#142"/>
        <path d="M600 194L589 203L599 205Z" fill="#dca13a"/><path d="M598 204Q588 208 592 219" fill="none" stroke="#e13342" stroke-width="5"/>
      </svg>
    </div>

    <div class="entry">
      <svg class="emoji" viewBox="1083 120 239 288" preserveAspectRatio="none">
        <ellipse cx="1202" cy="259" rx="108" ry="133" fill="url(#face)"/><ellipse cx="1202" cy="196" rx="80" ry="58" fill="url(#gloss)"/>
        <path d="M1133 192Q1150 170 1178 181M1228 181Q1252 170 1272 192" fill="none" stroke="#5a2a08" stroke-width="8" stroke-linecap="round"/>
        <path d="M1178 230Q1176 226 1165 226Q1152 226 1152 234T1165 242M1165 219V244M1250 230Q1248 226 1237 226Q1224 226 1224 234T1237 242M1237 219V244" fill="none" stroke="#5a2a08" stroke-width="4"/>
      </svg>
    </div>

    <div class="entry">
      <svg class="emoji" viewBox="77 120 239 288" preserveAspectRatio="none">
        <g fill="#c9cace"><ellipse cx="138" cy="165" rx="14" ry="17"/><ellipse cx="188" cy="138" rx="11" ry="14"/><ellipse cx="165" cy="180" rx="12" ry="12"/><ellipse cx="187" cy="186" rx="14" ry="15"/><ellipse cx="194" cy="160" rx="14" ry="14"/><ellipse cx="208" cy="147" rx="8" ry="9"/><ellipse cx="218" cy="138" rx="9" ry="11"/><ellipse cx="233" cy="138" rx="6" ry="8"/></g><ellipse cx="165" cy="142" rx="18" ry="22" fill="#d6d7da"/>
        <path d="M130 184L136 170L152 184Z" fill="#e4e4e6"/>
        <path d="M113 184H161V206L155 215L152 260H124L120 215L113 206Z" fill="#181817"/><path d="M113 188H161M113 208H161" stroke="#b9923a" stroke-width="3"/>
        <path d="M219 207H315V230H219Z" fill="#f20e27"/><path d="M219 207H315V213H219Z" fill="#ff7684"/><path d="M222 230H306V236H222Z" fill="#8f1020"/><path d="M222 235H304V270H222Z" fill="#ef4150"/>
      </svg>
    </div>

    <div class="entry">
      <svg class="emoji" viewBox="590 120 239 288" preserveAspectRatio="none">
        <g fill="#ffb93e" stroke="#e5942a" stroke-width="3"><path d="M619 218Q622 202 636 206Q644 215 652 280H630Z"/><path d="M637 168Q638 152 650 152Q660 154 663 168L686 290H650Z"/><path d="M730 290L733 158Q740 144 751 145Q763 150 762 165L752 290Z"/><path d="M694 290L708 140Q712 125 722 125Q736 128 736 142L728 290Z"/></g>
      </svg>
    </div>

    <div class="entry">
      <svg class="emoji" viewBox="1103 120 239 288" preserveAspectRatio="none">
        <ellipse cx="1222" cy="261" rx="108" ry="133" fill="url(#face)"/><ellipse cx="1222" cy="200" rx="80" ry="58" fill="url(#gloss)"/>
        <ellipse cx="1269" cy="242" rx="35" ry="42" fill="#e8e8e8" stroke="#81796a" stroke-width="4"/><ellipse cx="1269" cy="242" rx="10" ry="12" fill="#111"/>
      </svg>
    </div>
  </div>
</main>
</body>
</html>
```
FILE: styles.css
```css
* {
  box-sizing: border-box;
}

html {
  height: 100%;
  overflow: hidden;
}

body {
  margin: 0;
  height: 1990px;
  overflow: hidden;
  padding-top: 77px;
  font-family: Lato, sans-serif;
  color: #000;
  background: linear-gradient(to bottom right, #fa965b 0%, #f5c04f 21.5%, #7f9c8f 100%) top / 100% 5870px no-repeat;
}

.defs {
  display: block;
  width: 0;
  height: 0;
}

.card {
  display: flex;
  flex-direction: column;
  align-items: center;
  width: 1264px;
  height: 1913px;
  margin: 0 auto;
  padding-top: 226px;
  overflow: hidden;
  background: #fff;
  border-radius: 40px 40px 0 0;
}

.title {
  flex: none;
  margin: 0;
  font-size: 48px;
  font-weight: 900;
  line-height: 58px;
  letter-spacing: 4.1px;
  white-space: nowrap;
  text-transform: uppercase;
  -webkit-text-stroke: 0.8px #000;
}

.button {
  display: flex;
  flex: none;
  align-items: center;
  justify-content: center;
  width: 664px;
  height: 81px;
  margin-top: 59px;
  border-radius: 41px;
  font-size: 32px;
  letter-spacing: -0.1px;
  color: #fff;
  background: #0077e7;
}

.board {
  display: flex;
  flex: 1;
  flex-wrap: wrap;
  align-content: flex-start;
  align-self: stretch;
  min-height: 0;
  margin-top: 209px;
  overflow: hidden;
}

.entry {
  display: flex;
  flex-direction: column;
  align-items: center;
  width: 206px;
  height: 310px;
}

.emoji {
  flex: none;
  width: 96px;
  height: 96px;
}

.votes {
  margin-top: 34px;
  font-size: 48px;
  line-height: 58px;
}

.cash,
.age {
  font-family: "Liberation Sans", sans-serif;
  font-weight: 700;
}

.cash {
  font-size: 78px;
  text-anchor: middle;
  fill: #68401a;
}

.age {
  font-size: 180px;
  fill: #fff;
}
```
